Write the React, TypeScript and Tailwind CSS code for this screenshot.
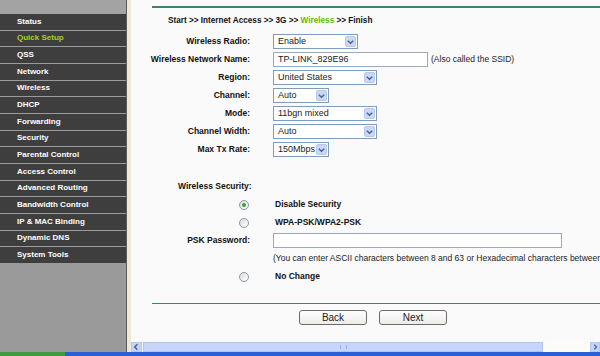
import React from "react";

const font = { fontFamily: '"Liberation Sans", Arial, sans-serif' };

const menu = [
  "Status",
  "Quick Setup",
  "QSS",
  "Network",
  "Wireless",
  "DHCP",
  "Forwarding",
  "Security",
  "Parental Control",
  "Access Control",
  "Advanced Routing",
  "Bandwidth Control",
  "IP & MAC Binding",
  "Dynamic DNS",
  "System Tools",
];

function Chevron({ dir = "down" }: { dir?: "down" | "left" | "right" }) {
  const d =
    dir === "down" ? "M2 3.5 L5 6.5 L8 3.5" : dir === "left" ? "M6 2 L3 5 L6 8" : "M4 2 L7 5 L4 8";
  return (
    <svg width="10" height="10" viewBox="0 0 10 10">
      <path d={d} fill="none" stroke="#4d6185" strokeWidth="1.6" />
    </svg>
  );
}

function Select({ value, w }: { value: string; w: string }) {
  return (
    <div
      className={`${w} h-[15px] border border-[#7f9db9] bg-white flex items-center justify-between`}
    >
      <span className="pl-[4px] text-[9px] text-[#222] leading-none">{value}</span>
      <span className="w-[11px] h-[11px] mr-[1px] rounded-[2px] bg-[#c9d8f8] border border-[#b6c9f0] flex items-center justify-center">
        <Chevron />
      </span>
    </div>
  );
}

function Input({ value, w }: { value?: string; w: string }) {
  return (
    <div className={`${w} h-[15px] border border-[#9aaabb] bg-white flex items-center`}>
      <span className="pl-[4px] text-[9px] text-[#222] leading-none">{value}</span>
    </div>
  );
}

function Radio({ checked }: { checked?: boolean }) {
  return (
    <span className="w-[10px] h-[10px] rounded-full border border-[#8797ab] bg-gradient-to-br from-[#dedbd2] to-white flex items-center justify-center">
      {checked && <span className="w-[4px] h-[4px] rounded-full bg-[#35a335]" />}
    </span>
  );
}

function Row({ label, children }: { label?: React.ReactNode; children?: React.ReactNode }) {
  return (
    <div className="h-[18px] flex items-center">
      <div className="w-[119px] shrink-0 flex justify-end text-[8.5px] font-bold text-[#111] whitespace-nowrap">
        {label}
      </div>
      <div className="ml-[23px] flex items-center whitespace-nowrap">{children}</div>
    </div>
  );
}

function Button({ label }: { label: string }) {
  return (
    <div className="w-[68px] h-[15px] rounded-[3px] border border-[#6b6b6b] bg-gradient-to-b from-white to-[#ecebe6] flex items-center justify-center text-[10px] text-[#222]">
      {label}
    </div>
  );
}

export default function App() {
  return (
    <div className="w-[600px] h-[356px] overflow-hidden flex flex-col" style={font}>
      <div className="flex h-[352px]">
        {/* sidebar */}
        <div className="w-[126px] shrink-0 bg-[#9a9a9a] flex flex-col">
          <div className="h-[14px] bg-[#a3a3a3]" />
          <div className="flex flex-col gap-[1px]">
            {menu.map((m) => (
              <div
                key={m}
                className={`h-[15.67px] bg-[#3e3e3e] flex items-center pl-[17px] text-[8px] font-bold ${
                  m === "Quick Setup" ? "text-[#a5d414]" : "text-white"
                }`}
              >
                {m}
              </div>
            ))}
          </div>
        </div>
        <div className="w-[1px] bg-[#5c5c5c]" />
        <div className="w-[4px] bg-[#ece9d8]" />
        {/* content */}
        <div className="flex-1 min-w-0 flex flex-col">
          <div className="flex-1 bg-[#fafafa] overflow-hidden">
            <div className="mt-[6px] ml-[21px] h-[1.5px] bg-[#3a8763]" />
            <div className="mt-[6px] ml-[37px] h-[14px] leading-[14px] text-[8.2px] font-bold text-[#111] whitespace-nowrap">
              Start &gt;&gt; Internet Access &gt;&gt; 3G &gt;&gt;{" "}
              <span className="text-[#66bb00]">Wireless</span> &gt;&gt; Finish
            </div>
            <div className="mt-[5px]">
              <Row label="Wireless Radio:">
                <Select value="Enable" w="w-[85px]" />
              </Row>
              <Row label="Wireless Network Name:">
                <Input value="TP-LINK_829E96" w="w-[155px]" />
                <span className="ml-[3px] text-[8.5px] text-[#222]">(Also called the SSID)</span>
              </Row>
              <Row label="Region:">
                <Select value="United States" w="w-[104px]" />
              </Row>
              <Row label="Channel:">
                <Select value="Auto" w="w-[56px]" />
              </Row>
              <Row label="Mode:">
                <Select value="11bgn mixed" w="w-[104px]" />
              </Row>
              <Row label="Channel Width:">
                <Select value="Auto" w="w-[104px]" />
              </Row>
              <Row label="Max Tx Rate:">
                <Select value="150Mbps" w="w-[56px]" />
              </Row>
            </div>
            <div className="mt-[19px] h-[18px] flex items-center pl-[47px] text-[8.5px] font-bold text-[#111]">
              Wireless Security:
            </div>
            <Row label={<span className="pr-[1px]"><Radio checked /></span>}>
              <span className="ml-[2px] text-[8.5px] font-bold text-[#111]">Disable Security</span>
            </Row>
            <Row label={<span className="pr-[1px]"><Radio /></span>}>
              <span className="ml-[2px] text-[8.5px] font-bold text-[#111]">WPA-PSK/WPA2-PSK</span>
            </Row>
            <Row label="PSK Password:">
              <Input w="w-[289px]" />
            </Row>
            <Row>
              <span className="text-[8.5px] text-[#222]">
                (You can enter ASCII characters between 8 and 63 or Hexadecimal characters between 8 and 64.)
              </span>
            </Row>
            <Row label={<span className="pr-[1px]"><Radio /></span>}>
              <span className="ml-[2px] text-[8.5px] font-bold text-[#111]">No Change</span>
            </Row>
            <div className="mt-[17px] ml-[21px] h-[1.5px] bg-[#3a8763]" />
            <div className="mt-[6px] ml-[168px] flex gap-[12px]">
              <Button label="Back" />
              <Button label="Next" />
            </div>
          </div>
          {/* horizontal scrollbar */}
          <div className="h-[10px] flex bg-[#fbfbf8]">
            <div className="w-[11px] h-full bg-[#c3d4fb] border border-[#b5c8f2] flex items-center justify-center">
              <Chevron dir="left" />
            </div>
            <div className="w-[400px] ml-[1px] h-full bg-[#c6d5fc] border border-[#b2c4ef] flex items-center justify-center">
              <span className="w-[7px] h-[4px] border-x border-[#9fb3e3]" />
            </div>
            <div className="flex-1" />
            <div className="w-[10px] h-full bg-[#c3d4fb] border border-[#b5c8f2] flex items-center justify-center">
              <Chevron dir="right" />
            </div>
          </div>
        </div>
      </div>
      {/* taskbar */}
      <div className="h-[4px] flex">
        <div className="w-[65px] bg-[#3f9b3f]" />
        <div className="flex-1 bg-[#2a5fd8]" />
      </div>
    </div>
  );
}
